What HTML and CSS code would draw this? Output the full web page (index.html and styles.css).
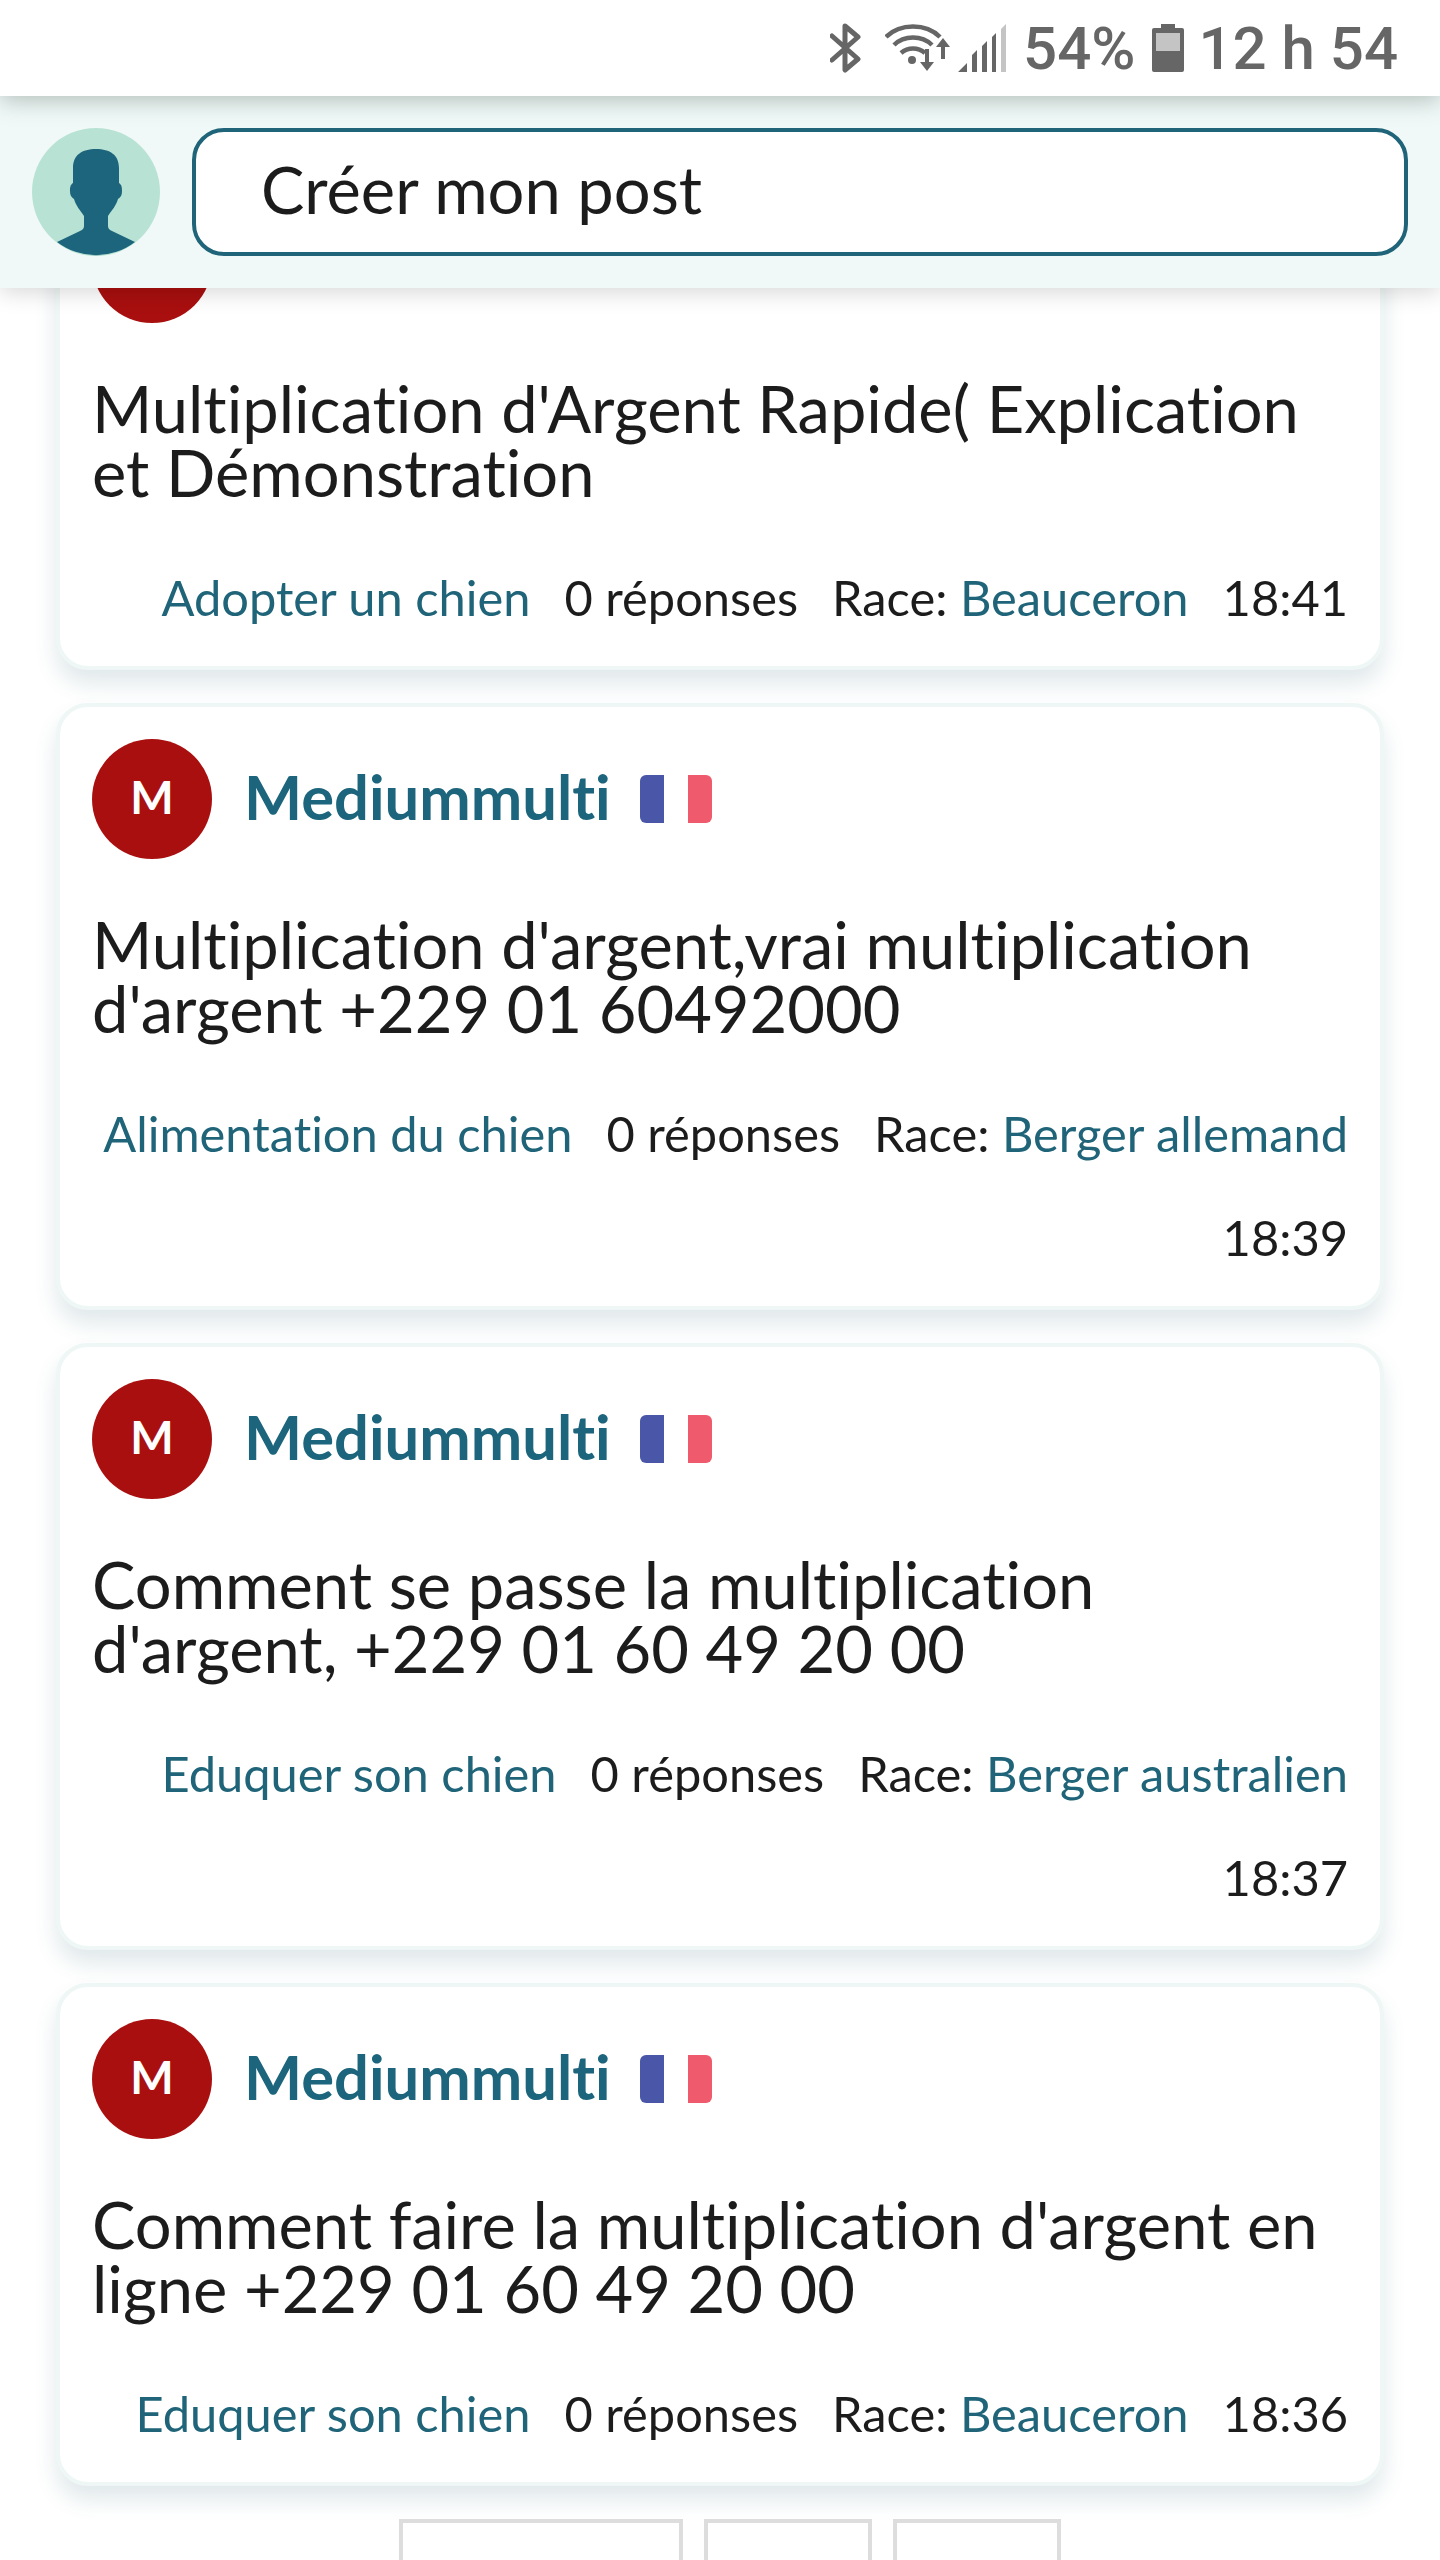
FILE: index.html
```html
<!DOCTYPE html>
<html lang="fr">
<head>
<meta charset="UTF-8">
<meta name="viewport" content="width=device-width, initial-scale=1.0">
<title>Forum</title>
<link rel="stylesheet" href="styles.css">
</head>
<body>
<div class="statusbar">
    <svg class="ic-bt" viewBox="0 0 31 50"><path d="M2 13 L28 36 L15 47 V3 L28 14 L2 37" fill="none" stroke="#666" stroke-width="5" stroke-linecap="round" stroke-linejoin="round"/></svg>
    <svg class="ic-wifi" viewBox="0 0 65 48">
        <g fill="none" stroke="#666" stroke-width="4.5">
            <path d="M1 13 C15 -1 41 -1 55 13"/>
            <path d="M9 21 C19 11 37 11 47 21"/>
            <path d="M16 29 C23 23 33 23 40 29"/>
        </g>
        <circle cx="27" cy="36" r="4" fill="#666"/>
        <path d="M40 25 h4 v13 h5 l-7 9 l-7 -9 h5 z M58 14 l7 9 h-5 v12 h-4 v-12 h-5 z" fill="#666"/>
    </svg>
    <svg class="ic-signal" viewBox="0 0 48 48">
        <path d="M0 48 L9 39 V48 Z M14 48 V31 L19 26 V48 Z M24 48 V22 L29 17 V48 Z M34 48 V13 L38 9 V48 Z" fill="#666"/>
        <path d="M43 48 V5 L48 0 V48 Z" fill="#c4c4c4"/>
    </svg>
    <span class="status-txt">54%</span>
    <svg class="ic-batt" viewBox="0 0 32 48">
        <path d="M9 0 H23 V4 H30 Q32 4 32 6 V46 Q32 48 30 48 H2 Q0 48 0 46 V6 Q0 4 2 4 H9 Z" fill="#666"/>
        <rect x="4" y="9" width="24" height="18" fill="#c4c4c4"/>
    </svg>
    <span class="status-txt">12 h 54</span>
</div>

<div class="top">
    <svg class="me" viewBox="0 0 128 128">
        <circle cx="64" cy="64" r="64" fill="#b8e3d4"/>
        <path d="M41 40 C41 27 50 21 64 21 C78 21 87 27 87 40 L87 55 C90 57 90 60 90 63 C90 67 89 69 86 71 C84 78 80 82 76 88 L76 98 C76 101 78 102 80 103 L103 114 A64 64 0 0 1 25 114 L48 103 C50 102 52 101 52 98 L52 88 C48 82 44 78 42 71 C39 69 38 67 38 63 C38 60 38 57 41 55 Z" fill="#1c657d"/>
    </svg>
    <div class="new-post">Créer mon post</div>
</div>

<div class="feed">
    <div class="card">
        <div class="head">
            <div class="avatar">M</div>
            <span class="name">Mediummulti</span>
            <div class="flag"><i class="blue"></i><i class="red"></i></div>
        </div>
        <div class="title">Multiplication d'Argent Rapide( Explication et Démonstration</div>
        <div class="meta">
            <a>Adopter un chien</a>
            <span>0 réponses</span>
            <span>Race: <a>Beauceron</a></span>
            <span>18:41</span>
        </div>
    </div>
    <div class="card">
        <div class="head">
            <div class="avatar">M</div>
            <span class="name">Mediummulti</span>
            <div class="flag"><i class="blue"></i><i class="red"></i></div>
        </div>
        <div class="title">Multiplication d'argent,vrai multiplication d'argent +229 01 60492000</div>
        <div class="meta">
            <a>Alimentation du chien</a>
            <span>0 réponses</span>
            <span>Race: <a>Berger allemand</a></span>
            <span>18:39</span>
        </div>
    </div>
    <div class="card">
        <div class="head">
            <div class="avatar">M</div>
            <span class="name">Mediummulti</span>
            <div class="flag"><i class="blue"></i><i class="red"></i></div>
        </div>
        <div class="title">Comment se passe la multiplication d'argent, +229 01 60 49 20 00</div>
        <div class="meta">
            <a>Eduquer son chien</a>
            <span>0 réponses</span>
            <span>Race: <a>Berger australien</a></span>
            <span>18:37</span>
        </div>
    </div>
    <div class="card">
        <div class="head">
            <div class="avatar">M</div>
            <span class="name">Mediummulti</span>
            <div class="flag"><i class="blue"></i><i class="red"></i></div>
        </div>
        <div class="title">Comment faire la multiplication d'argent en ligne +229 01 60 49 20 00</div>
        <div class="meta">
            <a>Eduquer son chien</a>
            <span>0 réponses</span>
            <span>Race: <a>Beauceron</a></span>
            <span>18:36</span>
        </div>
    </div>
</div>

<div class="pager">
    <div class="page-btn wide"></div>
    <div class="page-btn"></div>
    <div class="page-btn"></div>
</div>
</body>
</html>
```

FILE: styles.css
```css
body {
    margin: 0;
    height: 2560px;
    overflow: hidden;
    background: #fff;
    font-family: 'Lato', 'Noto Sans', sans-serif;
    font-variant-ligatures: none;
    color: #1c1c1c;
}
.statusbar {
    height: 96px;
    display: flex;
    align-items: center;
    justify-content: flex-end;
    padding-right: 42px;
    background: #fff;
    position: relative;
    z-index: 3;
    box-shadow: 0 4px 22px rgba(60,80,75,0.35);
}
.statusbar svg {
    display: block;
    flex: none;
}
.ic-bt { width: 31px; height: 50px; margin-right: 24px; }
.ic-wifi { width: 65px; height: 48px; margin-right: 8px; }
.ic-signal { width: 48px; height: 48px; margin-right: 17px; }
.ic-batt { width: 32px; height: 48px; margin: 0 14px 0 17px; }
.status-txt {
    font-family: 'Roboto', sans-serif;
    font-size: 60px;
    font-weight: 500;
    color: #666;
}
.top {
    height: 192px;
    box-sizing: border-box;
    padding: 32px;
    display: flex;
    gap: 32px;
    background: #f0f9f7;
    position: relative;
    z-index: 2;
    box-shadow: 0 4px 22px rgba(0,0,0,0.16);
}
.me {
    width: 128px;
    height: 128px;
    flex: none;
}
.new-post {
    flex: 1;
    box-sizing: border-box;
    height: 128px;
    border: 4px solid #1f6478;
    border-radius: 32px;
    background: #fff;
    padding-left: 65px;
    font-size: 65px;
    line-height: 114px;
}
.feed {
    margin: -121px 56px 0;
    display: flex;
    flex-direction: column;
    gap: 33px;
}
.card {
    border: 4px solid #eef7f5;
    border-radius: 32px;
    padding: 32px 32px 37px;
    background: #fff;
    box-shadow: 0 14px 22px rgba(40,100,110,0.14);
}
.head {
    display: flex;
    align-items: center;
}
.avatar {
    width: 120px;
    height: 120px;
    border-radius: 50%;
    background: #a90f0f;
    color: #fff;
    font-size: 46px;
    font-weight: 700;
    line-height: 116px;
    text-align: center;
    margin-right: 32px;
}
.name {
    font-size: 61.5px;
    font-weight: 700;
    line-height: 114px;
    margin-bottom: 6px;
    color: #1c657d;
    margin-right: 29px;
}
.flag {
    width: 72px;
    height: 48px;
    display: flex;
    justify-content: space-between;
}
.flag i {
    width: 24px;
}
.flag .blue {
    background: #4a57a8;
    border-radius: 6px 0 0 6px;
}
.flag .red {
    background: #ef5a6c;
    border-radius: 0 6px 6px 0;
}
.title {
    margin-top: 53px;
    font-size: 65px;
    line-height: 64px;
}
.meta {
    margin-top: 61px;
    display: flex;
    flex-wrap: wrap;
    justify-content: flex-end;
    column-gap: 34px;
    row-gap: 40px;
    font-size: 48.8px;
    line-height: 64px;
}
.meta a {
    color: #1f6478;
}
.pager {
    margin-top: 33px;
    padding-left: 20px;
    display: flex;
    justify-content: center;
    gap: 21px;
}
.page-btn {
    width: 160px;
    height: 120px;
    border: 4px solid #ddd;
}
.page-btn.wide {
    width: 276px;
}
```
